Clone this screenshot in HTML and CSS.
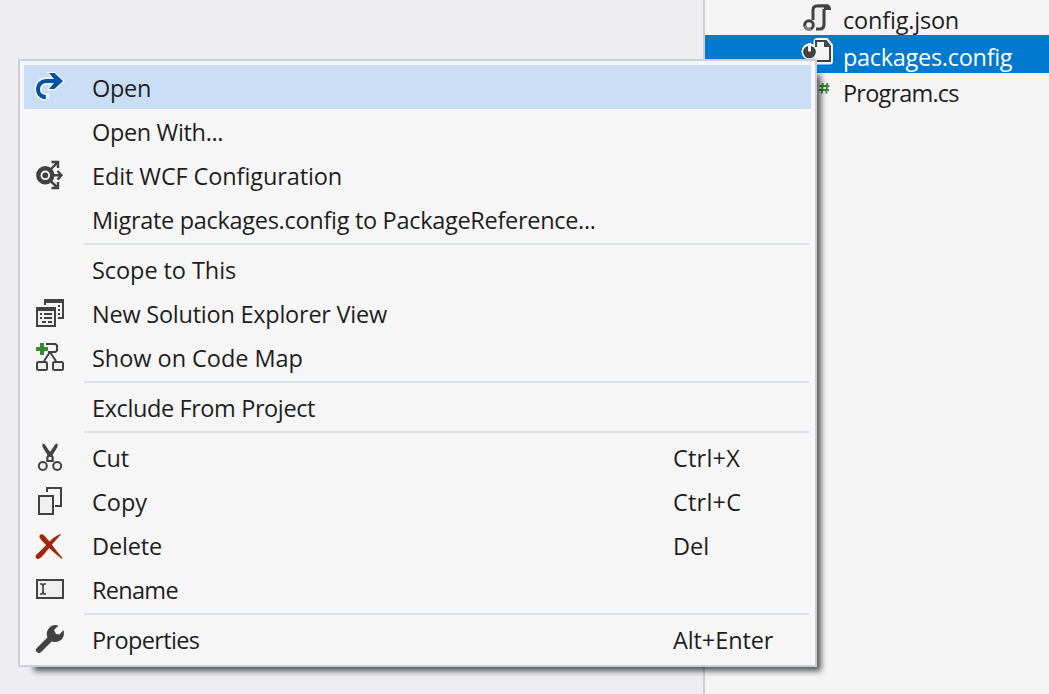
FILE: index.html
```html
<!DOCTYPE html>
<html lang="en">
<head>
<meta charset="utf-8">
<title>Solution Explorer</title>
<link rel="stylesheet" href="styles.css">
</head>
<body>
<main class="workspace">
  <div class="editor"></div>
  <aside class="explorer">
    <div class="file">
      <svg class="file-icon" viewBox="0 0 32 32"><path d="M13 4H24V26H13Z" fill="#efeff1"/><path d="M11 18V8Q11 4 15 4H26" class="line3"/><path d="M15 2.500H25Q29 2.500 29 8H22V5H15Z" fill="#424242"/><path d="M22 7V23Q21.500 27 18 27H14" class="line3"/><circle cx="7" cy="23" r="4.300" fill="#f5f5f5" stroke="#424242" stroke-width="3"/><path d="M3 24Q5 28 9 27" stroke="#858585" stroke-width="2" fill="none"/></svg>
      <span class="t-json">config.json</span>
    </div>
    <div class="file selected">
      <svg class="file-icon" viewBox="0 0 32 32"><path d="M12.500 4Q12.500 1 15.500 1H25L30 7V23Q30 25.500 27.500 25.500H13Z" fill="#f5f5f5" stroke="#f5f5f5" stroke-width="2"/><circle cx="7.500" cy="13.500" r="8" fill="#f5f5f5"/><path d="M14 9V3H24L28 8V23H11" class="line2"/><path d="M22 2.500L28.500 9H22Z" fill="#424242"/><circle cx="7.500" cy="14" r="6.300" fill="#424242"/><path d="M7.500 5V13.500" stroke="#f5f5f5" stroke-width="3"/></svg>
      <span class="t-pack">packages.config</span>
    </div>
    <div class="file">
      <svg class="file-icon" viewBox="0 0 32 32"><path d="M20.800 7L19.800 17.500M25.300 7L24.300 17.500M17.500 10H27.300M17 14H27" fill="none" stroke="#388a34" stroke-width="1.900"/></svg>
      <span class="t-prog">Program.cs</span>
    </div>
  </aside>
</main>

<nav class="menu">
  <div class="item active">
    <svg class="icon" viewBox="0 0 32 32"><g fill="none" stroke="#f6f8fc" stroke-width="7"><path d="M11.800 27.500V26C6.500 26 4 22 4 18.500C4 13 8 10 12 10H23"/></g><path d="M15 2H20.500L29 10L20.500 18H15L20 12V8Z" fill="#f6f8fc" stroke="#f6f8fc" stroke-width="2.500"/><path d="M11.800 26C6.500 26 4 22 4 18.500C4 13 8 10 12 10H24" fill="none" stroke="#00539c" stroke-width="4"/><path d="M15 2H20.500L29 10L20.500 18H15L20 12V8Z" fill="#00539c"/></svg>
    <span class="label t-open">Open</span>
  </div>
  <div class="item"><span class="icon"></span><span class="label t-with">Open With...</span></div>
  <div class="item">
    <svg class="icon" viewBox="0 0 32 32"><circle cx="11.300" cy="16.300" r="7" fill="none" stroke="#424242" stroke-width="4.400"/><circle cx="11.300" cy="16.300" r="2.900" fill="#424242"/><path d="M17 10L23.500 3.500M17.500 3H24V9M19 16.300H27M23.500 12L27.500 16.300L23.500 20.600M17 22.500L23.500 28.500M17.500 29H24V23" fill="none" stroke="#424242" stroke-width="2.400"/></svg>
    <span class="label t-wcf">Edit WCF Configuration</span>
  </div>
  <div class="item"><span class="icon"></span><span class="label t-mig">Migrate packages.config to PackageReference...</span></div>
  <hr class="sep">
  <div class="item"><span class="icon"></span><span class="label t-scope">Scope to This</span></div>
  <div class="item">
    <svg class="icon" viewBox="0 0 32 32"><path d="M11 8V3H29V21H24" class="line2"/><path d="M10 2H30V6H10Z" fill="#424242"/><path d="M24 8H26V10H24ZM24 12H26V14H24ZM24 16H26V18H24Z" fill="#424242"/><rect x="3" y="11" width="18" height="18" fill="#efeff0" stroke="#424242" stroke-width="2"/><path d="M2 10H22V14H2Z" fill="#424242"/><path d="M6 17H8M10 17H18M6 21H8M10 21H18M8 25H12M14 25H18" class="line2"/></svg>
    <span class="label t-new">New Solution Explorer View</span>
  </div>
  <div class="item">
    <svg class="icon" viewBox="0 0 32 32"><path d="M12 3H21.500L23 4.500V9.500L21.500 11H14M16 11L10 20M16 11L22 20" class="line2"/><rect x="3" y="21" width="10" height="8" rx="1.500" fill="#efeff0" stroke="#424242" stroke-width="2"/><rect x="19" y="21" width="10" height="8" rx="1.500" fill="#efeff0" stroke="#424242" stroke-width="2"/><path d="M2 8H14M8 2V14" stroke="#f5f5f5" stroke-width="6"/><path d="M2 8H14M8 2V14" stroke="#388a34" stroke-width="4"/></svg>
    <span class="label t-map">Show on Code Map</span>
  </div>
  <hr class="sep">
  <div class="item"><span class="icon"></span><span class="label t-excl">Exclude From Project</span></div>
  <hr class="sep">
  <div class="item">
    <svg class="icon" viewBox="0 0 32 32"><path d="M8.500 2.500L10.500 3L19.500 16V21H12.500V16L13.500 14L8.500 6Z" fill="#424242"/><path d="M23.500 2.500L21.500 3L12.500 16V21H19.500V16L18.500 14L23.500 6Z" fill="#424242"/><rect x="14.500" y="16" width="3" height="3" fill="#f5f5f5"/><circle cx="8.800" cy="25" r="4" fill="#efeff0" stroke="#424242" stroke-width="2"/><circle cx="23.200" cy="25" r="4" fill="#efeff0" stroke="#424242" stroke-width="2"/></svg>
    <span class="label t-cut">Cut</span><span class="key t-cx">Ctrl+X</span>
  </div>
  <div class="item">
    <svg class="icon" viewBox="0 0 32 32"><path d="M13 7V3H27V21H21" class="line2"/><rect x="5" y="11" width="14" height="18" fill="#efeff0" stroke="#424242" stroke-width="2"/></svg>
    <span class="label t-copy">Copy</span><span class="key t-cc">Ctrl+C</span>
  </div>
  <div class="item">
    <svg class="icon" viewBox="0 0 32 32"><path d="M5.500 8.500Q5 5 8.500 5.200Q10 5.500 17 14.500Q22 21.500 28.700 29.300L27.500 29.700Q19 23 13 17Q7 11 5.500 8.500Z" fill="#a1260d"/><path d="M26.500 5Q20 7.500 14 14Q7 21.500 2 26Q.500 30 4.500 30Q6 30 11.500 23.500Q18 15 27 5.500Z" fill="#a1260d"/></svg>
    <span class="label t-del">Delete</span><span class="key">Del</span>
  </div>
  <div class="item">
    <svg class="icon" viewBox="0 0 32 32"><rect x="3" y="7" width="26" height="18" fill="#efeff0" stroke="#424242" stroke-width="2"/><path d="M6 11H8L9 12.500V19.500L8 21H6M12 11H10L9 12.500M12 21H10L9 19.500" fill="none" stroke="#424242" stroke-width="1.700"/></svg>
    <span class="label t-ren">Rename</span>
  </div>
  <hr class="sep">
  <div class="item">
    <svg class="icon" viewBox="0 0 32 32"><path d="M5 27L17 15" stroke="#424242" stroke-width="6" stroke-linecap="round"/><path d="M24.500 2.500L20 7L22 11L25.500 11.500L29.500 7Q31 12 28 16Q25 19.500 19 19L13 13.500Q12 8 15.500 4.500Q19 1 24.500 2.500Z" fill="#424242"/></svg>
    <span class="label t-prop">Properties</span><span class="key t-ae">Alt+Enter</span>
  </div>
</nav>
</body>
</html>
```
FILE: styles.css
```css
* { box-sizing: border-box; }
body {
  margin: 0;
  height: 694px;
  overflow: hidden;
  background: #eeeef2;
  color: #1e1e1e;
  font: 23.5px/44px "Open Sans", "Noto Sans", sans-serif;
  white-space: nowrap;
}
.workspace { display: flex; height: 694px; }
.editor { width: 703px; }
.explorer {
  flex: 1;
  border-left: 2px solid #cccedb;
  background: #f5f5f5;
}
.file {
  display: flex;
  align-items: center;
  gap: 9px;
  height: 37px;
  padding-left: 97px;
  line-height: 34px;
}
.file:first-child { height: 35px; }
.file.selected { height: 38px; background: #007acf; color: #fff; }
.file span { padding-top: 5px; }
.file:last-child span { padding-top: 2px; }
.file-icon { width: 32px; height: 32px; overflow: visible; }
.menu {
  position: absolute;
  left: 18px;
  top: 59px;
  width: 799px;
  height: 608px;
  padding: 4px;
  border: 2px solid #ccceda;
  background: #f6f6f6;
  box-shadow: 10px 10px 6px -6px rgba(0, 0, 0, .65);
}
.item {
  display: flex;
  align-items: center;
  height: 44px;
  padding-left: 10px;
}
.item.active { background: #c9def5; }
.icon { width: 32px; height: 32px; margin-right: 26px; overflow: visible; }
.label { width: 581px; padding-top: 1px; }
.key { padding-top: 1px; }
.sep {
  height: 2px;
  margin: 2px 2px 2px 60px;
  border: 0;
  background: #dee1e6;
}
.line2 { fill: none; stroke: #424242; stroke-width: 2; }
.line3 { fill: none; stroke: #424242; stroke-width: 3; }

/* Tracking per caption */
.t-json { letter-spacing: -.2px; }
.t-pack { letter-spacing: -.3px; }
.t-prog { letter-spacing: -.8px; }
.t-open { letter-spacing: -.3px; }
.t-with { letter-spacing: -.35px; }
.t-wcf { letter-spacing: -.11px; }
.t-mig { letter-spacing: -.3px; }
.t-scope { letter-spacing: -.07px; }
.t-new { letter-spacing: -.24px; }
.t-map { letter-spacing: -.04px; }
.t-excl { letter-spacing: -.4px; }
.t-cut { letter-spacing: -.2px; }
.t-del { letter-spacing: -.15px; }
.t-ren { letter-spacing: -.7px; }
.t-prop { letter-spacing: -.65px; }
.t-cx, .t-cc { letter-spacing: .2px; }
.t-ae { letter-spacing: -.1px; }
```
